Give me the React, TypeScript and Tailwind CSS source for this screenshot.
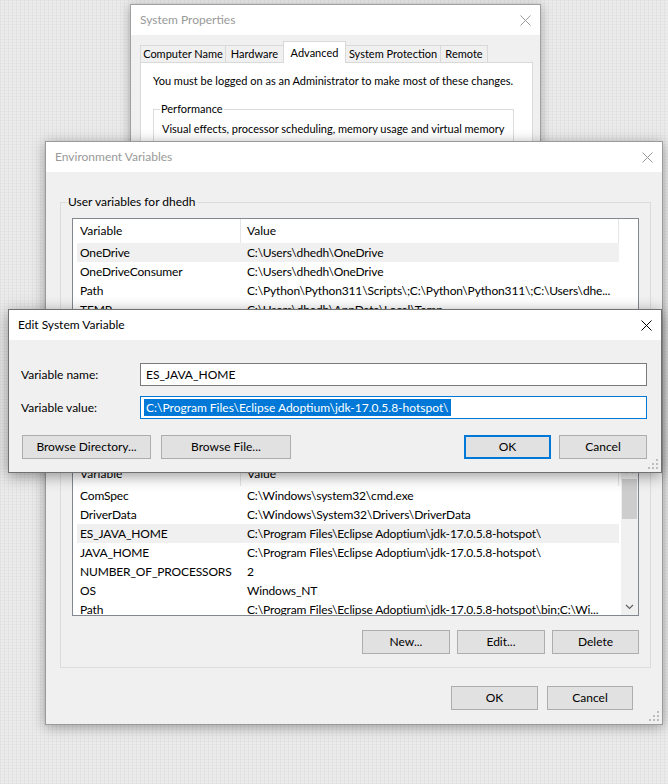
import React from "react";

type Row = [string, string];

const USER_ROWS: Row[] = [
    ["OneDrive", "C:\\Users\\dhedh\\OneDrive"],
    ["OneDriveConsumer", "C:\\Users\\dhedh\\OneDrive"],
    ["Path", "C:\\Python\\Python311\\Scripts\\;C:\\Python\\Python311\\;C:\\Users\\dhe..."],
    ["TEMP", "C:\\Users\\dhedh\\AppData\\Local\\Temp"],
    ["TMP", "C:\\Users\\dhedh\\AppData\\Local\\Temp"],
];

const SYSTEM_ROWS: Row[] = [
    ["ComSpec", "C:\\Windows\\system32\\cmd.exe"],
    ["DriverData", "C:\\Windows\\System32\\Drivers\\DriverData"],
    ["ES_JAVA_HOME", "C:\\Program Files\\Eclipse Adoptium\\jdk-17.0.5.8-hotspot\\"],
    ["JAVA_HOME", "C:\\Program Files\\Eclipse Adoptium\\jdk-17.0.5.8-hotspot\\"],
    ["NUMBER_OF_PROCESSORS", "2"],
    ["OS", "Windows_NT"],
    ["Path", "C:\\Program Files\\Eclipse Adoptium\\jdk-17.0.5.8-hotspot\\bin;C:\\Wi..."],
];

const TABS = [
    {label: "Computer Name", w: "w-[86px]"},
    {label: "Hardware", w: "w-[59px]"},
    {label: "Advanced", w: "w-[63px]", active: true},
    {label: "System Protection", w: "w-[96px]"},
    {label: "Remote", w: "w-[48px]"},
];

function CloseX({active}: { active?: boolean }) {
    return (
        <svg width="11" height="11" viewBox="0 0 11 11">
            <path d="M0.5 0.5 L10.5 10.5 M10.5 0.5 L0.5 10.5" stroke={active ? "#000000" : "#999999"} strokeWidth="1"/>
        </svg>
    );
}

function Gripper() {
    return (
        <svg width="10" height="10" viewBox="0 0 10 10" className="absolute bottom-[3px] right-[3px]">
            {[[8, 0], [8, 4], [4, 4], [8, 8], [4, 8], [0, 8]].map(([x, y]) => (
                <rect key={`${x}-${y}`} x={x} y={y} width="2" height="2" fill="#bcbcbc"/>
            ))}
        </svg>
    );
}

function TitleBar({title, active}: { title: string, active?: boolean }) {
    return (
        <div className="flex h-[30px] shrink-0 items-center justify-between bg-white pl-[9px]">
            <span className={active ? "text-black" : "text-[#999999]"}>{title}</span>
            <div className="flex h-full w-[30px] items-center justify-center">
                <CloseX active={active}/>
            </div>
        </div>
    );
}

function Btn({label, w, primary}: { label: string, w: string, primary?: boolean }) {
    const border = primary
        ? "border-[#0078d7] shadow-[inset_0_0_0_1px_#0078d7]"
        : "border-[#adadad]";
    return (
        <div className={`flex h-[24px] shrink-0 items-center justify-center border bg-[#e1e1e1] ${border} ${w}`}>
            {label}
        </div>
    );
}

function GroupBox({label, bg, className, children}: {
    label: string,
    bg: string,
    className?: string,
    children: React.ReactNode
}) {
    return (
        <div className={`relative border border-[#dcdcdc] ${className ?? ""}`}>
            <span className={`absolute left-[6px] top-[-9px] whitespace-nowrap px-[1px] leading-[16px] ${bg}`}>{label}</span>
            {children}
        </div>
    );
}

function ScrollBar() {
    return (
        <div className="flex w-[17px] shrink-0 flex-col bg-[#f0f0f0]">
            <div className="flex h-[17px] items-center justify-center">
                <svg width="9" height="6" viewBox="0 0 9 6">
                    <path d="M1 5 L4.5 1.5 L8 5" stroke="#606060" strokeWidth="1.2" fill="none"/>
                </svg>
            </div>
            <div className="flex-1">
                <div className="mx-[1px] h-[40px] bg-[#cdcdcd]"/>
            </div>
            <div className="flex h-[17px] items-center justify-center">
                <svg width="9" height="6" viewBox="0 0 9 6">
                    <path d="M1 1 L4.5 4.5 L8 1" stroke="#606060" strokeWidth="1.2" fill="none"/>
                </svg>
            </div>
        </div>
    );
}

function ListView({rows, selected, scroll}: { rows: Row[], selected: number, scroll?: boolean }) {
    return (
        <div className="flex h-[155px] overflow-hidden border border-[#828790] bg-white">
            <div className="flex min-w-0 flex-1 flex-col">
                <div className="flex h-[24px] shrink-0 items-center">
                    <div className="flex h-full w-[168px] items-center border-r border-[#e5e5e5] pl-[7px]">Variable</div>
                    <div className="flex h-full w-[378px] items-center border-r border-[#e5e5e5] pl-[6px]">Value</div>
                </div>
                {rows.map((row, i) => (
                    <div
                        key={row[0] + i}
                        className={`ml-[4px] flex h-[19px] w-[542px] shrink-0 items-center overflow-hidden whitespace-nowrap tracking-[-0.15px] ${i === selected ? "bg-[#f0f0f0]" : ""}`}>
                        <div className="w-[163px] shrink-0 pl-[3px]">{row[0]}</div>
                        <div className="pl-[7px]">{row[1]}</div>
                    </div>
                ))}
            </div>
            {scroll && <ScrollBar/>}
        </div>
    );
}

function SystemProperties() {
    return (
        <div className="absolute left-[130px] top-[4px] flex h-[480px] w-[411px] flex-col border border-[#a0a0a0] bg-[#f0f0f0] shadow-[0_2px_10px_rgba(0,0,0,0.3)]">
            <TitleBar title="System Properties"/>
            <div className="flex flex-1 flex-col pl-[9px] pr-[7px] pt-[6px] text-[11px]">
                <div className="flex h-[21px] items-end">
                    {TABS.map((tab) => (
                        <div
                            key={tab.label}
                            className={tab.active
                                ? `relative z-10 -ml-px mb-[-1px] flex h-[22px] items-start justify-center whitespace-nowrap border border-b-0 border-[#d9d9d9] bg-white pt-[3px] ${tab.w}`
                                : `-ml-px flex h-[17px] items-center justify-center whitespace-nowrap border border-b-0 border-[#d9d9d9] bg-[#f0f0f0] first:ml-0 ${tab.w}`}>
                            {tab.label}
                        </div>
                    ))}
                </div>
                <div className="flex flex-1 flex-col border border-[#d9d9d9] bg-white pl-[12px] pr-[18px] pt-[10px]">
                    <div className="whitespace-nowrap leading-[15px]">
                        You must be logged on as an Administrator to make most of these changes.
                    </div>
                    <GroupBox label="Performance" bg="bg-white" className="mt-[21px] h-[90px] pl-[8px] pt-[11px]">
                        <div className="whitespace-nowrap leading-[15px]">
                            Visual effects, processor scheduling, memory usage and virtual memory
                        </div>
                    </GroupBox>
                </div>
            </div>
        </div>
    );
}

function EnvironmentVariables() {
    return (
        <div className="absolute left-[45px] top-[141px] flex h-[584px] w-[618px] flex-col border border-[#9a9a9a] bg-[#f0f0f0] shadow-[0_2px_12px_rgba(0,0,0,0.35)]">
            <TitleBar title="Environment Variables"/>
            <div className="flex flex-col pl-[14px] pr-[11px]">
                <GroupBox label="User variables for dhedh" bg="bg-[#f0f0f0]" className="mt-[30px] px-[11px] pb-[13px] pt-[15px]">
                    <ListView rows={USER_ROWS} selected={0}/>
                    <div className="mt-[14px] flex justify-end gap-[7px]">
                        <Btn label="New..." w="w-[88px]"/>
                        <Btn label="Edit..." w="w-[88px]"/>
                        <Btn label="Delete" w="w-[87px]"/>
                    </div>
                </GroupBox>
                <GroupBox label="System variables" bg="bg-[#f0f0f0]" className="mt-[20px] px-[11px] pb-[13px] pt-[15px]">
                    <ListView rows={SYSTEM_ROWS} selected={2} scroll/>
                    <div className="mt-[14px] flex justify-end gap-[7px]">
                        <Btn label="New..." w="w-[88px]"/>
                        <Btn label="Edit..." w="w-[88px]"/>
                        <Btn label="Delete" w="w-[87px]"/>
                    </div>
                </GroupBox>
                <div className="mt-[18px] flex justify-end gap-[9px] pr-[18px]">
                    <Btn label="OK" w="w-[87px]"/>
                    <Btn label="Cancel" w="w-[86px]"/>
                </div>
            </div>
            <Gripper/>
        </div>
    );
}

function EditSystemVariable() {
    return (
        <div className="absolute left-[8px] top-[309px] flex h-[164px] w-[654px] flex-col border border-[#707070] bg-[#f0f0f0] shadow-[0_3px_14px_rgba(0,0,0,0.4)]">
            <TitleBar title="Edit System Variable" active/>
            <div className="flex flex-col pl-[12px] pr-[14px]">
                <div className="mt-[23px] flex items-center">
                    <div className="w-[119px]">Variable name:</div>
                    <div className="flex h-[23px] flex-1 items-center border border-[#7a7a7a] bg-white pl-[3px]">
                        <span className="px-[2px]">ES_JAVA_HOME</span>
                    </div>
                </div>
                <div className="mt-[10px] flex items-center">
                    <div className="w-[119px]">Variable value:</div>
                    <div className="flex h-[23px] flex-1 items-center border border-[#0078d7] bg-white pl-[3px]">
                        <span className="whitespace-nowrap bg-[#0078d7] px-[2px] leading-[17px] text-white">
                            C:\Program Files\Eclipse Adoptium\jdk-17.0.5.8-hotspot\
                        </span>
                    </div>
                </div>
                <div className="mt-[16px] flex items-center pl-[1px]">
                    <Btn label="Browse Directory..." w="w-[129px]"/>
                    <div className="ml-[10px]">
                        <Btn label="Browse File..." w="w-[130px]"/>
                    </div>
                    <div className="flex-1"/>
                    <Btn label="OK" w="w-[87px]" primary/>
                    <div className="ml-[8px]">
                        <Btn label="Cancel" w="w-[88px]"/>
                    </div>
                </div>
            </div>
            <Gripper/>
        </div>
    );
}

export default function App() {
    return (
        <div className="relative h-[784px] w-[668px] overflow-hidden bg-[#ebebeb] bg-[image:repeating-linear-gradient(0deg,rgba(0,0,0,0.025)_0px,rgba(0,0,0,0.025)_1px,transparent_1px,transparent_3px),repeating-linear-gradient(90deg,rgba(0,0,0,0.03)_0px,rgba(0,0,0,0.03)_1px,transparent_1px,transparent_4px)] font-['Lato','Liberation_Sans',sans-serif] text-[12px] text-black">
            <SystemProperties/>
            <EnvironmentVariables/>
            <EditSystemVariable/>
        </div>
    );
}
